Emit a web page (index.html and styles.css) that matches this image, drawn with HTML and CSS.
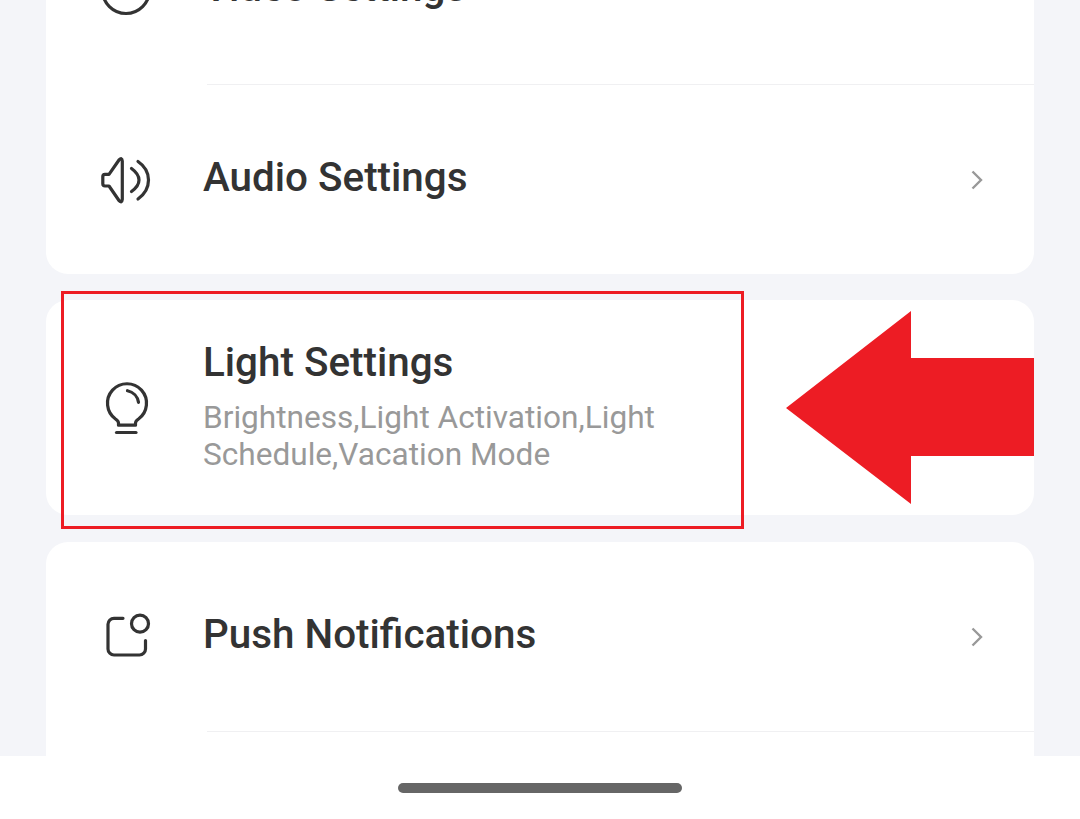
FILE: index.html
```html
<!DOCTYPE html>
<html>
<head>
    <title>Device Settings</title>
    <link rel="stylesheet" href="styles.css">
</head>
<body>
    <div class="screen">
        <div class="scroller">
            <div class="card">
                <div class="row">
                    <svg class="icon" viewBox="0 0 56 56"><circle cx="28" cy="28" r="23.5"/></svg>
                    <span class="title">Video Settings</span>
                    <svg class="chevron" viewBox="0 0 14 22"><path d="M2.5 2.5L11 11L2.5 19.5"/></svg>
                </div>
                <div class="divider"></div>
                <div class="row">
                    <svg class="icon" viewBox="0 0 56 56">
                        <path d="M4.8 24.5q0-2.2 2.2-2.2h4L21 8q3-3 3.3 1V47.5q-.3 4-3.3 1L11 34H7q-2.2 0-2.2-2.2z"/>
                        <path d="M33.5 16.5Q41 22 41 28T33.5 39.5"/>
                        <path d="M40 9.5C54 19 54 37 40 47"/>
                    </svg>
                    <span class="title">Audio Settings</span>
                    <svg class="chevron" viewBox="0 0 14 22"><path d="M2.5 2.5L11 11L2.5 19.5"/></svg>
                </div>
            </div>

            <div class="card card-light">
                <div class="row row-tall">
                    <svg class="icon" viewBox="0 0 56 56">
                        <path d="M20.5 45.2H37.5V43Q37.5 41 40.5 39A19.5 19.5 0 1 0 17.5 39Q20.5 41 20.5 43z"/>
                        <path d="M18.5 52.5H38"/>
                        <path d="M29.5 10.7A14 14 0 0 1 40.5 22.3"/>
                    </svg>
                    <div class="text">
                        <span class="title">Light Settings</span>
                        <p class="sub">Brightness,Light Activation,Light Schedule,Vacation Mode</p>
                    </div>
                </div>
            </div>

            <div class="card">
                <div class="row">
                    <svg class="icon" viewBox="0 0 56 56">
                        <path d="M25 9.3H16a6 6 0 0 0-6 6V40a6 6 0 0 0 6 6H41.5a6 6 0 0 0 6-6V31.5"/>
                        <circle cx="42" cy="14.7" r="8.5"/>
                    </svg>
                    <span class="title">Push Notifications</span>
                    <svg class="chevron" viewBox="0 0 14 22"><path d="M2.5 2.5L11 11L2.5 19.5"/></svg>
                </div>
                <div class="divider"></div>
                <div class="row"></div>
            </div>
        </div>

        <div class="nav_bar">
            <div class="home_handle"></div>
        </div>

        <!-- annotations on top of the screenshot -->
        <div class="mark_box"></div>
        <svg class="mark_arrow" viewBox="0 0 248 193"><polygon points="0,97 125,0 125,47 248,47 248,145 125,145 125,193"/></svg>
    </div>
</body>
</html>
```

FILE: styles.css
```css
body {
    margin: 0;
    padding: 0;
    font-family: Roboto, "Noto Sans", sans-serif;
    background-color: #f4f5f9;
    color: #333;
}

.screen {
    position: relative;
    display: flex;
    flex-direction: column;
    width: 1080px;
    height: 819px;
    overflow: hidden;
}

.scroller {
    flex: 1;
    min-height: 0;
    overflow: hidden;
    display: flex;
    flex-direction: column;
    gap: 26px;
    padding: 0 46px;
}

.card {
    flex-shrink: 0;
    background-color: #fff;
    border-radius: 22px;
}

.card:first-child {
    margin-top: -105px;
}

.card-light {
    margin-bottom: 1px;
}

.row {
    display: flex;
    align-items: center;
    height: 189px;
    padding: 0 50px 0 52px;
}

.row-tall {
    height: 215px;
}

.divider {
    height: 1px;
    margin-left: 161px;
    background-color: #f0f0f2;
}

.icon {
    flex-shrink: 0;
    width: 56px;
    height: 56px;
    margin-right: 49px;
    fill: none;
    stroke: #333;
    stroke-width: 3.2;
    stroke-linecap: round;
    stroke-linejoin: round;
}

.title {
    flex: 1;
    font-size: 40.4px;
    font-weight: 500;
    line-height: 46px;
}

.row > .title {
    margin-bottom: 4px;
}

.text {
    display: flex;
    flex-direction: column;
    width: 480px;
    margin-top: -2px;
}

.sub {
    margin: 14px 0 0;
    font-size: 31.6px;
    line-height: 36.5px;
    color: #999;
}

.chevron {
    flex-shrink: 0;
    width: 14px;
    height: 22px;
    fill: none;
    stroke: #999;
    stroke-width: 2.4;
}

.nav_bar {
    flex-shrink: 0;
    display: flex;
    justify-content: center;
    height: 63px;
    padding-top: 27px;
    box-sizing: border-box;
    background-color: #fff;
}

.home_handle {
    width: 284px;
    height: 10px;
    border-radius: 5px;
    background-color: #666;
}

.mark_box {
    position: absolute;
    left: 61px;
    top: 291px;
    width: 677px;
    height: 232px;
    border: 3px solid #ed1c24;
}

.mark_arrow {
    position: absolute;
    left: 786px;
    top: 311px;
    width: 248px;
    height: 193px;
    fill: #ed1c24;
}
```
